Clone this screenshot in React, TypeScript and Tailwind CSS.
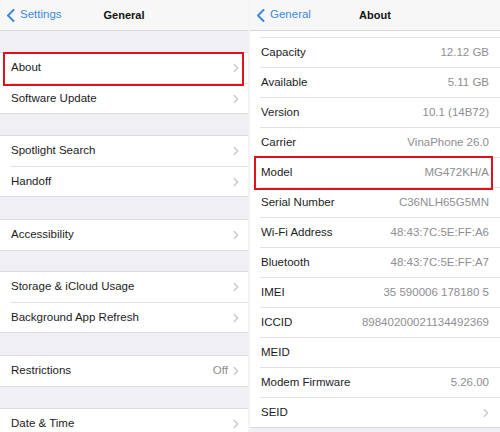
import React from "react";

type Row = { label: string; value?: string; chevron?: boolean };

const Chevron = () => (
  <svg width="6" height="10" viewBox="0 0 6 10" className="ml-[5px] shrink-0">
    <path d="M1.2 1.5l3.5 3.5-3.5 3.5" fill="none" stroke="#c7c7cc" strokeWidth="1.3" strokeLinecap="round" strokeLinejoin="round" />
  </svg>
);

const BackChevron = () => (
  <svg width="9" height="13" viewBox="0 0 9 13" className="shrink-0">
    <path d="M7.5 1L2 6.5 7.5 12" fill="none" stroke="#3b8ae0" strokeWidth="2" strokeLinecap="round" strokeLinejoin="round" />
  </svg>
);

function NavBar({ back, title }: { back: string; title: string }) {
  return (
    <div className="relative h-[31px] shrink-0 bg-[#f7f7f8] border-b border-[#d9d9dd] flex items-center">
      <div className="flex items-center gap-[5px] pl-[6px] text-[#3b8ae0] text-[11.5px]">
        <BackChevron />
        <span>{back}</span>
      </div>
      <div className="absolute inset-0 flex items-center justify-center text-[11px] font-bold text-[#111]">
        {title}
      </div>
    </div>
  );
}

function SettingRow({ row, first, boxed }: { row: Row; first?: boolean; boxed?: boolean }) {
  return (
    <div className="relative h-[30px] bg-white">
      <div
        className={
          "ml-[10px] h-full flex items-center pl-[1px] pr-[9px] text-[11.5px] " +
          (first ? "" : "border-t border-[#e2e2e6]")
        }
      >
        <span className="text-[#1c1c1e] flex-1">{row.label}</span>
        {row.value && <span className="text-[#8e8e93]">{row.value}</span>}
        {row.chevron && <Chevron />}
      </div>
      {boxed && (
        <div className="absolute z-10 left-[3px] right-[4px] top-[-1px] bottom-[-3px] border-[2.5px] border-[#e2101c]" />
      )}
    </div>
  );
}

function Group({ rows, boxedIndex }: { rows: Row[]; boxedIndex?: number }) {
  return (
    <div className="border-y border-[#dcdce0]">
      {rows.map((r, i) => (
        <SettingRow key={r.label} row={r} first={i === 0} boxed={boxedIndex === i} />
      ))}
    </div>
  );
}

const aboutRows: Row[] = [
  { label: "Capacity", value: "12.12 GB" },
  { label: "Available", value: "5.11 GB" },
  { label: "Version", value: "10.1 (14B72)" },
  { label: "Carrier", value: "VinaPhone 26.0" },
  { label: "Model", value: "MG472KH/A" },
  { label: "Serial Number", value: "C36NLH65G5MN" },
  { label: "Wi-Fi Address", value: "48:43:7C:5E:FF:A6" },
  { label: "Bluetooth", value: "48:43:7C:5E:FF:A7" },
  { label: "IMEI", value: "35 590006 178180 5" },
  { label: "ICCID", value: "89840200021134492369" },
  { label: "MEID" },
  { label: "Modem Firmware", value: "5.26.00" },
  { label: "SEID", chevron: true },
];

export default function App() {
  return (
    <div
      className="w-[500px] h-[432px] flex overflow-hidden bg-white"
      style={{ fontFamily: '"Liberation Sans", Arial, sans-serif' }}
    >
      {/* General */}
      <div className="w-[248px] shrink-0 flex flex-col bg-[#efeff4]">
        <NavBar back="Settings" title="General" />
        <div className="h-[21px] shrink-0" />
        <Group
          boxedIndex={0}
          rows={[
            { label: "About", chevron: true },
            { label: "Software Update", chevron: true },
          ]}
        />
        <div className="h-[21px] shrink-0" />
        <Group
          rows={[
            { label: "Spotlight Search", chevron: true },
            { label: "Handoff", chevron: true },
          ]}
        />
        <div className="h-[22px] shrink-0" />
        <Group rows={[{ label: "Accessibility", chevron: true }]} />
        <div className="h-[20px] shrink-0" />
        <Group
          rows={[
            { label: "Storage & iCloud Usage", chevron: true },
            { label: "Background App Refresh", chevron: true },
          ]}
        />
        <div className="h-[22px] shrink-0" />
        <Group rows={[{ label: "Restrictions", value: "Off", chevron: true }]} />
        <div className="h-[21px] shrink-0" />
        <Group rows={[{ label: "Date & Time", chevron: true }]} />
      </div>

      <div className="w-[2px] shrink-0 bg-[#f4f4f6]" />

      {/* About */}
      <div className="flex-1 flex flex-col bg-[#efeff4]">
        <NavBar back="General" title="About" />
        <div className="bg-white">
          <div className="h-[6px]" />
          {aboutRows.map((r) => (
            <div key={r.label} className="relative h-[30px] bg-white">
              <div className="ml-[10px] h-full flex items-center pl-[1px] pr-[11px] text-[11.5px] border-t border-[#e2e2e6]">
                <span className="text-[#1c1c1e] flex-1">{r.label}</span>
                {r.value && <span className="text-[#8e8e93]">{r.value}</span>}
                {r.chevron && <Chevron />}
              </div>
              {r.label === "Model" && (
                <div className="absolute z-10 left-[4px] right-[7px] top-[-1px] bottom-[-3px] border-[2.5px] border-[#e2101c]" />
              )}
            </div>
          ))}
        </div>
        <div className="border-t border-[#dcdce0] flex-1" />
      </div>
    </div>
  );
}
